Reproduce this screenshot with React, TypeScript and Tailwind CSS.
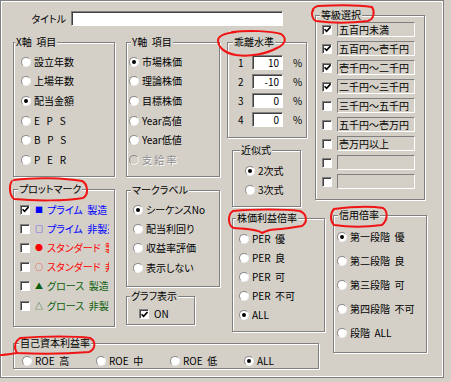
import React from 'react';

const font = "[font-family:'Noto_Sans_CJK_JP','Liberation_Sans',sans-serif] [font-feature-settings:'palt']";

const Radio: React.FC<{ on?: boolean; off?: boolean }> = ({ on, off }) => (
  <span
    className={`flex items-center justify-center w-[10px] h-[10px] shrink-0 rounded-full border border-t-[#8a8a8a] border-l-[#8a8a8a] border-r-[#f2f2f2] border-b-[#f2f2f2] ${off ? 'bg-[#d4d0c8]' : 'bg-white'}`}
  >
    {on && <span className="w-[4px] h-[4px] rounded-full bg-black" />}
  </span>
);

const Check: React.FC<{ on?: boolean }> = ({ on }) => (
  <span className="flex items-center justify-center w-[10px] h-[10px] shrink-0 border border-t-[#808080] border-l-[#808080] border-r-white border-b-white bg-white shadow-[inset_1px_1px_0_#404040]">
    {on && (
      <svg width="7" height="7" viewBox="0 0 7 7">
        <path d="M0.5 3.2 L2.6 5.4 L6.5 1" stroke="#000" strokeWidth="1.6" fill="none" />
      </svg>
    )}
  </span>
);

const Group: React.FC<{ title: string; className: string; legend: string; children?: React.ReactNode }> = ({
  title,
  className,
  legend,
  children,
}) => (
  <div className={`relative shrink-0 border border-[#808080] shadow-[inset_1px_1px_0_#fff,1px_1px_0_#fff] ${className}`}>
    <span className={`absolute top-[-7px] bg-[#d4d0c8] px-[1px] leading-[12px] whitespace-pre ${legend}`}>{title}</span>
    {children}
  </div>
);

const RadioRow: React.FC<{ label: string; on?: boolean; off?: boolean; h: string }> = ({ label, on, off, h }) => (
  <div className={`flex items-center gap-[3px] ${h}`}>
    <Radio on={on} off={off} />
    <span className={`leading-[12px] whitespace-pre ${off ? 'text-[#8c8c8c] [text-shadow:1px_1px_0_#fff]' : ''}`}>{label}</span>
  </div>
);

const plotRows = [
  { sym: '■', text: 'プライム  製造', color: 'text-[#0000ff]', on: true },
  { sym: '□', text: 'プライム  非製造', color: 'text-[#0000ff]' },
  { sym: '●', text: 'スタンダード  製造', color: 'text-[#ff0000]' },
  { sym: '○', text: 'スタンダード  非製造', color: 'text-[#ff0000]' },
  { sym: '▲', text: 'グロース  製造', color: 'text-[#0b5e0b]' },
  { sym: '△', text: 'グロース  非製造', color: 'text-[#0b5e0b]' },
];

const grades = ['五百円未満', '五百円～壱千円', '壱千円～二千円', '二千円～三千円', '三千円～五千円', '五千円～壱万円', '壱万円以上', '', ''];

const App: React.FC = () => {
  return (
    <div className={`relative w-[451px] h-[382px] bg-[#d4d0c8] text-[10px] text-black ${font}`}>
      <div className="w-[444px] h-[378px] border border-[#808080] shadow-[inset_1px_1px_0_#fff,inset_-1px_-1px_0_#fff] flex pl-[12px]">
        {/* left block */}
        <div className="w-[302px] shrink-0 flex flex-col">
          {/* title */}
          <div className="flex items-center mt-[10px] h-[15px]">
            <span className="w-[58px] pr-[5px] text-right leading-[12px] whitespace-nowrap">タイトル</span>
            <div className="w-[212px] h-[15px] bg-white border border-t-[#808080] border-l-[#808080] border-r-white border-b-white shadow-[inset_1px_1px_0_#404040]" />
          </div>

          <div className="flex mt-[16px]">
            {/* col A */}
            <div className="flex flex-col w-[102px] shrink-0">
              <Group title="X軸  項目" className="h-[135px] pl-[7px] pt-[9px]" legend="left-[1px]">
                <RadioRow label="設立年数" h="h-[19.6px]" />
                <RadioRow label="上場年数" h="h-[19.6px]" />
                <RadioRow label="配当金額" on h="h-[19.6px]" />
                <RadioRow label="E   P   S" h="h-[19.6px]" />
                <RadioRow label="B   P   S" h="h-[19.6px]" />
                <RadioRow label="P   E   R" h="h-[19.6px]" />
              </Group>
              <Group title="プロットマーク" className="h-[138px] mt-[12px] pl-[6px] pt-[10px]" legend="left-[4px]">
                {plotRows.map((r) => (
                  <div key={r.text} className="flex items-center h-[19.2px]">
                    <Check on={r.on} />
                    <div className={`w-[79px] overflow-hidden whitespace-pre flex items-center leading-[12px] ${r.color}`}>
                      <span className="w-[8px] text-center text-[8px] ml-[5px]">{r.sym}</span>
                      <span className="ml-[4px]">{r.text}</span>
                    </div>
                  </div>
                ))}
              </Group>
            </div>

            {/* col B */}
            <div className="flex flex-col w-[94px] ml-[11px] shrink-0">
              <Group title="Y軸  項目" className="h-[135px] pl-[2px] pt-[9px]" legend="left-[4px]">
                <RadioRow label="市場株価" on h="h-[19.6px]" />
                <RadioRow label="理論株価" h="h-[19.6px]" />
                <RadioRow label="目標株価" h="h-[19.6px]" />
                <RadioRow label="Year高値" h="h-[19.6px]" />
                <RadioRow label="Year低値" h="h-[19.6px]" />
                <RadioRow label="支 給 率" off h="h-[19.6px]" />
              </Group>
              <Group title="マークラベル" className="h-[97px] mt-[13px] pl-[6px] pt-[9px]" legend="left-[4px]">
                <RadioRow label="シーケンスNo" on h="h-[19.3px]" />
                <RadioRow label="配当利回り" h="h-[19.3px]" />
                <RadioRow label="収益率評価" h="h-[19.3px]" />
                <RadioRow label="表示しない" h="h-[19.3px]" />
              </Group>
              <Group title="グラフ表示" className="w-[69px] h-[29px] mt-[9px] pl-[12px] pt-[10px]" legend="left-[3px]">
                <div className="flex items-center gap-[5px] h-[14px]">
                  <Check on />
                  <span className="leading-[12px]">ON</span>
                </div>
              </Group>
            </div>

            {/* col C */}
            <div className="flex flex-col ml-[7px] shrink-0">
              <Group title="乖離水準" className="w-[80px] h-[96px] pl-[10px] pt-[10px]" legend="left-[5px]">
                {['10', '-10', '0', '0'].map((v, i) => (
                  <div key={i} className="flex items-center h-[19px]">
                    <span className="w-[14px] leading-[12px]">{i + 1}</span>
                    <div className="w-[31px] h-[15px] bg-white border border-t-[#808080] border-l-[#808080] border-r-white border-b-white shadow-[inset_1px_1px_0_#404040] text-right pr-[3px] leading-[13px]">
                      {v}
                    </div>
                    <span className="ml-[10px] leading-[12px]">%</span>
                  </div>
                ))}
              </Group>
              <Group title="近似式" className="w-[69px] h-[57px] ml-[5px] mt-[12px] pl-[12px] pt-[10px]" legend="left-[7px]">
                <RadioRow label="2次式" on h="h-[19px]" />
                <RadioRow label="3次式" h="h-[19px]" />
              </Group>
              <Group title="株価利益倍率" className="w-[93px] h-[114px] ml-[5px] mt-[11px] pl-[6px] pt-[10px]" legend="left-[3px]">
                <RadioRow label="PER  優" h="h-[19px]" />
                <RadioRow label="PER  良" h="h-[19px]" />
                <RadioRow label="PER  可" h="h-[19px]" />
                <RadioRow label="PER  不可" h="h-[19px]" />
                <RadioRow label="ALL" on h="h-[19px]" />
              </Group>
            </div>
          </div>

          {/* ROE */}
          <Group title="自己資本利益率" className="w-[306px] h-[26px] mt-[11px] pl-[8px] pt-[10px] flex" legend="left-[5px]">
            {[
              { l: 'ROE  高' },
              { l: 'ROE  中' },
              { l: 'ROE  低' },
              { l: 'ALL', on: true },
            ].map((r) => (
              <div key={r.l} className="w-[74px] shrink-0">
                <RadioRow label={r.l} on={r.on} h="h-[14px]" />
              </div>
            ))}
          </Group>
        </div>

        {/* col D */}
        <div className="flex flex-col mt-[14px] shrink-0">
          <Group title="等級選択" className="w-[110px] h-[185px] pl-[6px] pt-[4px]" legend="left-[4px]">
            {grades.map((g, i) => (
              <div key={i} className="flex items-center h-[19px]">
                <Check on={i < 4} />
                <div className="ml-[5px] w-[78px] h-[15px] border border-t-[#808080] border-l-[#808080] border-r-white border-b-white pl-[1px] leading-[13px] whitespace-nowrap overflow-hidden">
                  {g}
                </div>
              </div>
            ))}
          </Group>
          <Group title="信用倍率" className="w-[94px] h-[138px] ml-[18px] mt-[15px] pl-[3px] pt-[9px]" legend="left-[4px]">
            <RadioRow label="第一段階  優" on h="h-[24px]" />
            <RadioRow label="第二段階  良" h="h-[24px]" />
            <RadioRow label="第三段階  可" h="h-[24px]" />
            <RadioRow label="第四段階  不可" h="h-[24px]" />
            <RadioRow label="段階  ALL" h="h-[24px]" />
          </Group>
        </div>
      </div>

      {/* hand-drawn red marks */}
      <svg className="absolute inset-0 pointer-events-none" width="451" height="382" viewBox="0 0 451 382">
        <g stroke="#f01414" strokeWidth="2" fill="none" strokeLinecap="round" strokeLinejoin="round">
          <path d="M313 9 C311 14 312 19 316 21 C330 23 352 23 368 21 C374 19 375 12 372 7 C360 5 335 5 318 6 C314 7 313 8 313 11" />
          <path d="M232 32 C250 30 270 31 281 34 C287 38 286 44 277 48 C266 54 250 57 236 55 C224 53 218 47 218 40 C219 35 225 33 236 32" />
          <path d="M14 180 C35 177 65 178 82 181 C88 184 89 195 83 198 C65 201 35 201 14 199 C9 195 9 185 12 181" />
          <path d="M233 211 C255 209 285 209 300 211 C307 214 308 222 302 226 C292 228 280 229 270 230 C266 231 262 233 262 233 C258 229 245 229 234 228 C228 226 227 215 233 211" />
          <path d="M334 209 C350 207 370 206 383 208 C388 211 388 220 382 225 C367 227 348 227 334 225 C330 221 330 213 334 209" />
          <path d="M20 338 C45 336 75 336 90 338 C96 341 96 349 89 352 C65 354 40 354 17 353 C14 349 14 342 20 338" />
          <path d="M17 353 C10 354 4 355 0 355" />
        </g>
      </svg>
    </div>
  );
};

export default App;
